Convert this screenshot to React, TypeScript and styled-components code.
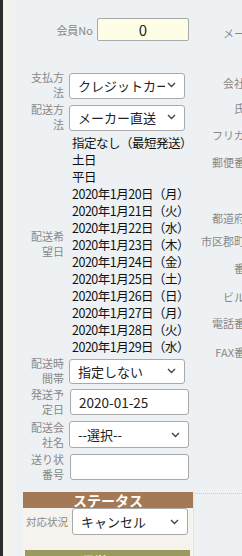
import React from "react";
import styled, { createGlobalStyle } from "styled-components";

const GlobalStyle = createGlobalStyle`
  html, body {
    margin: 0;
    padding: 0;
    overflow: hidden;
  }
  body {
    font-family: "Noto Sans CJK JP", "Noto Sans", sans-serif;
    background: #edf1f3;
  }
`;

const Page = styled.div`
  display: flex;
  width: 242px;
  height: 556px;
  overflow: hidden;
`;

const SideEdge = styled.div`
  width: 3px;
  flex: none;
  background: #2b2b2d;
`;

const Main = styled.div`
  flex: 1;
  display: flex;
  background: linear-gradient(to right, #f4f2ec 0, #edf1f3 18px);
`;

const LeftCol = styled.div`
  width: 192px;
  flex: none;
  padding-top: 18px;
`;

const RightCol = styled.div`
  flex: 1;
  padding-top: 26px;
  overflow: hidden;
`;

const MemberRow = styled.div`
  display: flex;
  align-items: center;
  gap: 4px;
  height: 23px;
  padding-left: 52px;
  margin-bottom: 31px;
`;

const MemberLabel = styled.label`
  width: 38px;
  text-align: right;
  font-size: 11px;
  line-height: 14px;
  color: #888;
  white-space: nowrap;
`;

const MemberInput = styled.input`
  box-sizing: border-box;
  width: 92px;
  height: 23px;
  border: 1px solid #a9a9a9;
  border-radius: 2px;
  background: #fefee6;
  text-align: center;
  font-family: inherit;
  font-size: 15px;
  color: #222;
  padding: 0;
  margin: 0;
`;

const FieldRow = styled.div<{ $gap?: number }>`
  display: flex;
  align-items: center;
  gap: 5px;
  padding-left: 27px;
  margin-bottom: ${(p) => p.$gap ?? 6}px;
`;

const FieldLabel = styled.label`
  width: 34px;
  flex: none;
  text-align: right;
  font-size: 11px;
  line-height: 15px;
  margin: -3px 0;
  color: #888;
  word-break: break-all;
`;

const SelectWrap = styled.div<{ $w: number; $h?: number }>`
  position: relative;
  width: ${(p) => p.$w}px;
  height: ${(p) => p.$h ?? 26}px;
  flex: none;
`;

const Select = styled.select`
  appearance: none;
  box-sizing: border-box;
  width: 100%;
  height: 100%;
  border: 1px solid #a9a9a9;
  border-radius: 3px;
  background: #fff;
  font-family: inherit;
  font-size: 13px;
  color: #222;
  padding: 0 19px 0 8px;
  margin: 0;
`;

const Chevron = styled.svg`
  position: absolute;
  right: 9px;
  top: 50%;
  margin-top: -3px;
  pointer-events: none;
`;

const TextInput = styled.input<{ $w: number }>`
  box-sizing: border-box;
  width: ${(p) => p.$w}px;
  height: 26px;
  border: 1px solid #a9a9a9;
  border-radius: 3px;
  background: #fff;
  font-family: inherit;
  font-size: 13.5px;
  color: #222;
  padding: 0 8px;
  margin: 0 0 0 1px;
`;

const DateList = styled.ul`
  list-style: none;
  margin: -2px 0 -3px;
  padding: 0 0 0 3px;
`;

const DateItem = styled.li`
  font-size: 12.5px;
  line-height: 17px;
  height: 17px;
  color: #111;
  white-space: nowrap;
  letter-spacing: -0.5px;
`;

const StatusPanel = styled.section`
  margin: 12px 0 0 20px;
  width: 170px;
  height: 80px;
  background: #f6f2ee;
  border-right: 1px solid #e4e4e4;
`;

const PanelHead = styled.div<{ $tone: string }>`
  height: 16px;
  line-height: 16px;
  background: ${(p) => p.$tone};
  color: #fff;
  font-size: 14px;
  font-weight: 700;
  text-align: center;
  overflow: hidden;
`;

const StatusRow = styled.div`
  display: flex;
  align-items: center;
  gap: 4px;
  padding-left: 3px;
  height: 27px;
  margin-bottom: 15px;
`;

const StatusLabel = styled.label`
  font-size: 10.5px;
  color: #888;
  white-space: nowrap;
  width: 42px;
  flex: none;
`;

const SubHead = styled(PanelHead)`
  margin: 0 3px 0 2px;
  height: 20px;
  line-height: 22px;
`;

const RightRow = styled.div<{ $h: number }>`
  height: ${(p) => p.$h}px;
`;

const RightLabel = styled.label`
  display: block;
  width: 61px;
  text-align: right;
  font-size: 11px;
  line-height: 14px;
  color: #888;
  white-space: nowrap;
`;

const Divider = styled.div`
  border-top: 1px dotted #c8c8c8;
  margin-left: -2px;
`;

const ChevronIcon = () => (
  <Chevron width="9" height="6" viewBox="0 0 9 6">
    <path d="M1 1 L4.5 4.5 L8 1" fill="none" stroke="#444" strokeWidth="1.4" />
  </Chevron>
);

const Dropdown = ({ w, h, value }: { w: number; h?: number; value: string }) => (
  <SelectWrap $w={w} $h={h}>
    <Select defaultValue={value}>
      <option>{value}</option>
    </Select>
    <ChevronIcon />
  </SelectWrap>
);

const dates = [
  "指定なし（最短発送）",
  "土日",
  "平日",
  "2020年1月20日（月）",
  "2020年1月21日（火）",
  "2020年1月22日（水）",
  "2020年1月23日（木）",
  "2020年1月24日（金）",
  "2020年1月25日（土）",
  "2020年1月26日（日）",
  "2020年1月27日（月）",
  "2020年1月28日（火）",
  "2020年1月29日（水）",
];

const rightFields: [string, number][] = [
  ["メール", 50],
  ["会社名", 25],
  ["氏名", 27],
  ["フリガナ", 27],
  ["郵便番号", 56],
  ["都道府県", 23],
  ["市区郡町村", 27],
  ["番地", 29],
  ["ビル名", 26],
  ["電話番号", 29],
  ["FAX番号", 148],
];

const App = () => (
  <>
    <GlobalStyle />
    <Page>
      <SideEdge />
      <Main>
        <LeftCol>
          <MemberRow>
            <MemberLabel>会員No</MemberLabel>
            <MemberInput defaultValue="0" />
          </MemberRow>

          <FieldRow>
            <FieldLabel>支払方法</FieldLabel>
            <Dropdown w={116} value="クレジットカード" />
          </FieldRow>
          <FieldRow>
            <FieldLabel>配送方法</FieldLabel>
            <Dropdown w={116} value="メーカー直送" />
          </FieldRow>
          <FieldRow>
            <FieldLabel>配送希望日</FieldLabel>
            <DateList>
              {dates.map((d) => (
                <DateItem key={d}>{d}</DateItem>
              ))}
            </DateList>
          </FieldRow>
          <FieldRow>
            <FieldLabel>配送時間帯</FieldLabel>
            <Dropdown w={116} h={25} value="指定しない" />
          </FieldRow>
          <FieldRow>
            <FieldLabel>発送予定日</FieldLabel>
            <TextInput $w={119} defaultValue="2020-01-25" />
          </FieldRow>
          <FieldRow>
            <FieldLabel>配送会社名</FieldLabel>
            <Dropdown w={120} h={27} value="--選択--" />
          </FieldRow>
          <FieldRow $gap={0}>
            <FieldLabel>送り状番号</FieldLabel>
            <TextInput $w={119} defaultValue="" />
          </FieldRow>

          <StatusPanel>
            <PanelHead $tone="#a47a56">ステータス</PanelHead>
            <StatusRow>
              <StatusLabel>対応状況</StatusLabel>
              <Dropdown w={116} h={27} value="キャンセル" />
            </StatusRow>
            <SubHead $tone="#9a9a60">運営メモ</SubHead>
          </StatusPanel>
        </LeftCol>

        <RightCol>
          {rightFields.map(([label, h]) => (
            <RightRow key={label} $h={h}>
              <RightLabel>{label}</RightLabel>
            </RightRow>
          ))}
          <Divider />
        </RightCol>
      </Main>
    </Page>
  </>
);

export default App;
